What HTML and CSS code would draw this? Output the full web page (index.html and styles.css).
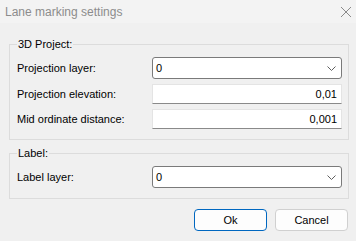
FILE: index.html
```html
<!DOCTYPE html>
<html lang="en">
<head>
    <meta charset="UTF-8">
    <title>Lane marking settings</title>
    <link rel="stylesheet" href="styles.css">
</head>
<body>
    <div class="titlebar">
        <span class="title">Lane marking settings</span>
        <svg class="close" width="12" height="12" viewBox="0 0 12 12">
            <path d="M1 1 L11 11 M11 1 L1 11" stroke="#8a8a8a" stroke-width="1" fill="none"/>
        </svg>
    </div>

    <div class="content">
        <!-- 3D project group -->
        <fieldset class="group">
            <legend>3D Project:</legend>
            <div class="row">
                <label>Projection layer:</label>
                <div class="combo">
                    <span>0</span>
                    <svg width="9" height="5" viewBox="0 0 9 5"><path d="M0.5 0.5 L4.5 4.5 L8.5 0.5" stroke="#606060" fill="none"/></svg>
                </div>
            </div>
            <div class="row">
                <label>Projection elevation:</label>
                <div class="field">0,01</div>
            </div>
            <div class="row">
                <label>Mid ordinate distance:</label>
                <div class="field">0,001</div>
            </div>
        </fieldset>

        <!-- Label group -->
        <fieldset class="group">
            <legend>Label:</legend>
            <div class="row">
                <label>Label layer:</label>
                <div class="combo">
                    <span>0</span>
                    <svg width="9" height="5" viewBox="0 0 9 5"><path d="M0.5 0.5 L4.5 4.5 L8.5 0.5" stroke="#606060" fill="none"/></svg>
                </div>
            </div>
        </fieldset>

        <div class="buttons">
            <button class="btn btn-default">Ok</button>
            <button class="btn">Cancel</button>
        </div>
    </div>
</body>
</html>
```

FILE: styles.css
```css
body {
    margin: 0;
    background-color: #f0f0f0;
    color: #000;
    font-family: "Liberation Sans", Arial, sans-serif;
    font-size: 11px;
    width: 356px;
    height: 241px;
    overflow: hidden;
}
.titlebar {
    height: 23px;
    background: #f3f3f3;
    display: flex;
    align-items: center;
    justify-content: space-between;
    padding: 0 4px 0 5px;
}
.title {
    color: #8c8c8c;
    font-size: 12px;
}
.content {
    padding: 14px 7px 0 9px;
}
.group {
    margin: 0 0 6px 0;
    padding: 5px 6px 10px 7px;
    border: 1px solid #dcdcdc;
    min-width: 0;
}
.group legend {
    padding: 0 1px;
    line-height: 15px;
}
.row {
    display: flex;
    align-items: center;
    height: 20px;
    margin-top: 5px;
}
.row:first-of-type {
    margin-top: 0;
    height: 22px;
}
.row label {
    width: 135px;
    flex-shrink: 0;
}
.combo {
    flex: 1;
    height: 22px;
    box-sizing: border-box;
    background: #fff;
    border: 1px solid #7a7a7a;
    border-radius: 3px;
    display: flex;
    align-items: center;
    justify-content: space-between;
    padding: 0 5px 0 3px;
}
.field {
    flex: 1;
    height: 20px;
    box-sizing: border-box;
    background: #fff;
    border: 1px solid #e4e4e4;
    border-bottom-color: #8a8a8a;
    display: flex;
    align-items: center;
    justify-content: flex-end;
    padding-right: 4px;
}
.buttons {
    display: flex;
    justify-content: flex-end;
    gap: 8px;
    margin-top: 10px;
    padding-right: 1px;
}
.btn {
    width: 73px;
    height: 22px;
    font-family: inherit;
    font-size: 11px;
    background: #fdfdfd;
    border: 1px solid #d0d0d0;
    border-radius: 4px;
    padding: 0;
}
.btn-default {
    border-color: #0067c0;
}
```
